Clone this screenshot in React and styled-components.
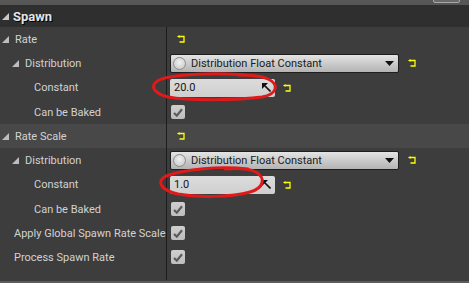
import React from "react";
import styled, { createGlobalStyle } from "styled-components";

const Global = createGlobalStyle`
  html, body { margin: 0; padding: 0; background: #3d3d3d; }
  body { font-family: Roboto, "Liberation Sans", sans-serif; }
`;

const Panel = styled.div`
  position: relative;
  width: 469px;
  height: 283px;
  background: #3d3d3d;
  overflow: hidden;
  display: flex;
  flex-direction: column;
`;

const TopStrip = styled.div`
  height: 5px;
  background: #575757;
  position: relative;
  flex: none;
`;

const TopButton = styled.div`
  position: absolute;
  left: 433px;
  top: -3px;
  width: 25px;
  height: 4px;
  border: 1px solid #a8a8a8;
  border-radius: 2px;
  background: #6a6a6a;
`;

const Header = styled.div`
  height: 22px;
  background: #2f2f2f;
  display: flex;
  align-items: center;
  padding-left: 2px;
  gap: 4px;
  flex: none;
`;

const HeaderText = styled.span`
  font-weight: bold;
  font-size: 13px;
  color: #e4e4e4;
  text-shadow: 1px 1px 0 #000;
`;

const Row = styled.div`
  display: flex;
  height: ${(p) => p.$h || 24}px;
  background: ${(p) => (p.$hl ? "#484848" : "#3d3d3d")};
  flex: none;
`;

const NameCell = styled.div`
  width: 166px;
  flex: none;
  display: flex;
  align-items: center;
  padding-left: ${(p) => p.$indent}px;
  box-sizing: border-box;
  overflow: hidden;
  white-space: nowrap;
  font-size: 11px;
  color: #d2d2d2;
  gap: 6px;
`;

const ValueCell = styled.div`
  flex: 1;
  border-left: 1px solid #1c1c1c;
  display: flex;
  align-items: center;
  padding-left: 3px;
  gap: 8px;
`;

const Filler = styled.div`
  flex: none;
  height: 11px;
  display: flex;
`;

const FillerLeft = styled.div`
  width: 166px;
`;

const FillerRight = styled.div`
  flex: 1;
  border-left: 1px solid #1c1c1c;
`;

const Bottom = styled.div`
  margin-top: auto;
  height: 2px;
  background: #5c5c5c;
  flex: none;
`;

const ResetWrap = styled.span`
  display: inline-flex;
  margin-left: ${(p) => p.$ml || 0}px;
`;

const Dropdown = styled.div`
  width: 229px;
  height: 19px;
  box-sizing: border-box;
  border: 1px solid #1e1e1e;
  border-radius: 2px;
  background: linear-gradient(#e4e4e4, #c6c6c6 60%, #b4b4b4);
  display: flex;
  align-items: center;
  padding: 0 4px 0 2px;
  gap: 5px;
  font-size: 11px;
  color: #1a1a1a;
`;

const Radio = styled.span`
  width: 13px;
  height: 13px;
  border-radius: 50%;
  box-sizing: border-box;
  border: 1px solid #8c8c8c;
  background: radial-gradient(circle at 50% 40%, #f0f0f0, #c4c4c4);
  flex: none;
`;

const DropLabel = styled.span`
  flex: 1;
`;

const NumberBox = styled.div`
  width: 105px;
  height: 18px;
  box-sizing: border-box;
  border-radius: 2px;
  background: linear-gradient(#dcdcdc, #cfcfcf);
  display: flex;
  align-items: center;
  padding: 0 4px 0 4px;
  font-size: 11px;
  color: #141414;
  position: relative;
`;

const NumText = styled.span`
  flex: 1;
`;

const Check = styled.div`
  width: 14px;
  height: 14px;
  margin-left: 1px;
  border-radius: 2px;
  background: linear-gradient(#cfcfcf, #bdbdbd);
  display: flex;
  align-items: center;
  justify-content: center;
`;

const Overlay = styled.svg`
  position: absolute;
  left: 0;
  top: 0;
  pointer-events: none;
`;

const Tri = ({ c = "#bdbdbd" }) => (
  <svg width="7" height="7" viewBox="0 0 7 7">
    <polygon points="7,0 7,7 0,7" fill={c} />
  </svg>
);

const Reset = ({ ml }) => (
  <ResetWrap $ml={ml}>
    <svg width="8" height="8" viewBox="0 0 8 8">
      <path d="M2 1.5 H7 V7 H2.5" fill="none" stroke="#ffff00" strokeWidth="1.3" />
      <polygon points="0,1.5 2.5,0 2.5,3" fill="#ffff00" />
    </svg>
  </ResetWrap>
);

const Arrow = () => (
  <svg width="9" height="5" viewBox="0 0 9 5">
    <polygon points="0,0 9,0 4.5,5" fill="#111" />
  </svg>
);

const Spin = () => (
  <svg width="9" height="9" viewBox="0 0 9 9">
    <polygon points="0,0 6,0 0,6" fill="#111" />
    <line x1="2" y1="2" x2="8.5" y2="8.5" stroke="#111" strokeWidth="1.6" />
  </svg>
);

const Tick = () => (
  <svg width="10" height="9" viewBox="0 0 10 9">
    <path d="M1 5 L3.8 7.6 L9 1.2" fill="none" stroke="#5a5a5a" strokeWidth="2.2" />
  </svg>
);

const Category = ({ label, hl }) => (
  <Row $hl={hl}>
    <NameCell $indent={2}>
      <Tri />
      <span>{label}</span>
    </NameCell>
    <ValueCell>
      <Reset ml={7} />
    </ValueCell>
  </Row>
);

const DistRow = () => (
  <Row>
    <NameCell $indent={12}>
      <Tri />
      <span>Distribution</span>
    </NameCell>
    <ValueCell>
      <Dropdown>
        <Radio />
        <DropLabel>Distribution Float Constant</DropLabel>
        <Arrow />
      </Dropdown>
      <Reset ml={1} />
    </ValueCell>
  </Row>
);

const ConstRow = ({ value }) => (
  <Row $h={25}>
    <NameCell $indent={34}>
      <span>Constant</span>
    </NameCell>
    <ValueCell>
      <NumberBox>
        <NumText>{value}</NumText>
        <Spin />
      </NumberBox>
      <Reset ml={0} />
    </ValueCell>
  </Row>
);

const CheckRow = ({ label, indent }) => (
  <Row>
    <NameCell $indent={indent}>
      <span>{label}</span>
    </NameCell>
    <ValueCell>
      <Check>
        <Tick />
      </Check>
    </ValueCell>
  </Row>
);

export default function App() {
  return (
    <>
      <Global />
      <Panel>
        <TopStrip>
          <TopButton />
        </TopStrip>
        <Header>
          <Tri c="#c8c8c8" />
          <HeaderText>Spawn</HeaderText>
        </Header>
        <Category label="Rate" />
        <DistRow />
        <ConstRow value="20.0" />
        <CheckRow label="Can be Baked" indent={34} />
        <Category label="Rate Scale" hl />
        <DistRow />
        <ConstRow value="1.0" />
        <CheckRow label="Can be Baked" indent={34} />
        <CheckRow label="Apply Global Spawn Rate Scale" indent={14} />
        <CheckRow label="Process Spawn Rate" indent={14} />
        <Filler>
          <FillerLeft />
          <FillerRight />
        </Filler>
        <Bottom />
        <Overlay width="469" height="283" viewBox="0 0 469 283">
          <path
            d="M262 77 C230 72, 175 73, 159 80 C150 85, 152 93, 168 97 C190 101, 240 100, 262 97 C278 94, 279 84, 268 79 C262 76, 250 75, 238 75"
            fill="none"
            stroke="#e0191b"
            strokeWidth="3"
            strokeLinecap="round"
          />
          <path
            d="M248 169 C220 166, 185 169, 166 176 C156 181, 160 190, 178 194 C200 198, 232 197, 250 192 C264 188, 266 178, 256 172 C250 169, 238 168, 225 169"
            fill="none"
            stroke="#e0191b"
            strokeWidth="3"
            strokeLinecap="round"
          />
        </Overlay>
      </Panel>
    </>
  );
}
